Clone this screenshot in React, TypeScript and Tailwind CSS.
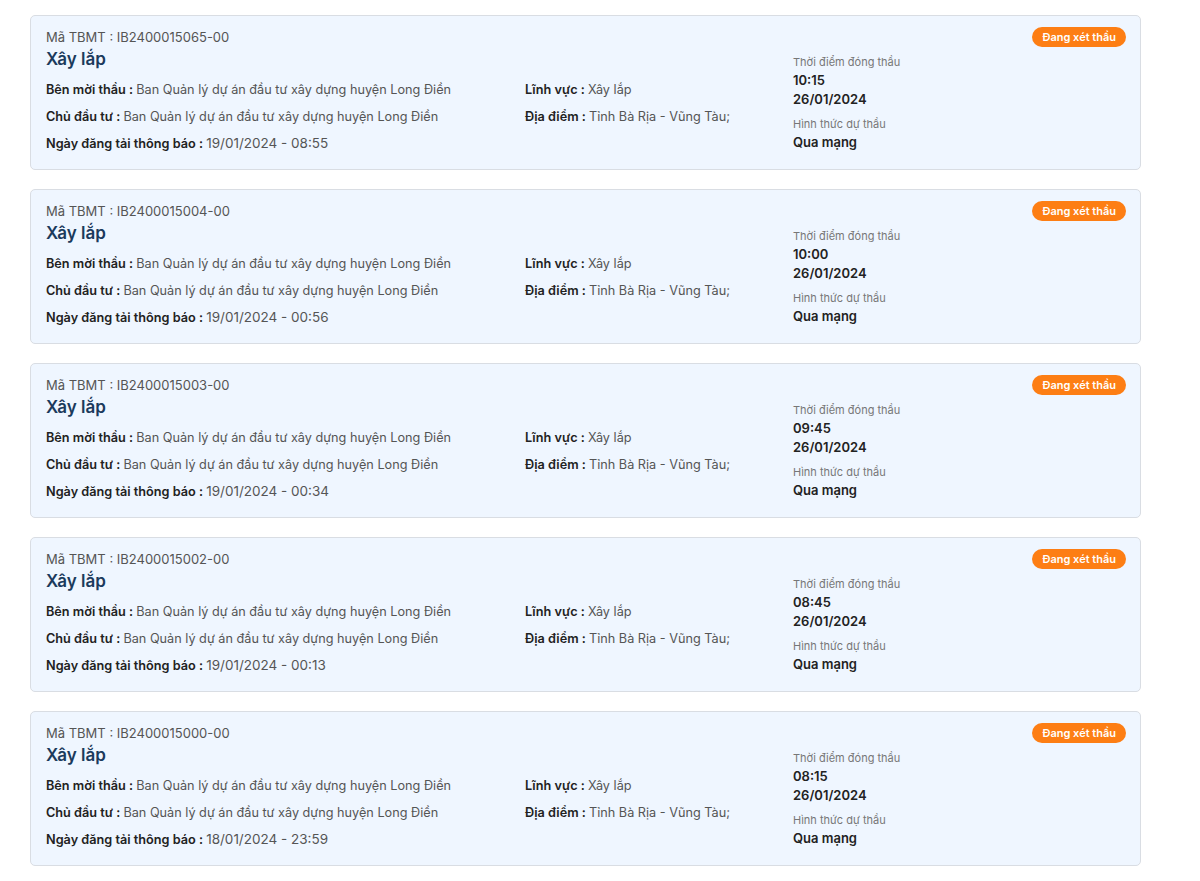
const items = [
  { code: "IB2400015065-00", posted: "19/01/2024 - 08:55", time: "10:15" },
  { code: "IB2400015004-00", posted: "19/01/2024 - 00:56", time: "10:00" },
  { code: "IB2400015003-00", posted: "19/01/2024 - 00:34", time: "09:45" },
  { code: "IB2400015002-00", posted: "19/01/2024 - 00:13", time: "08:45" },
  { code: "IB2400015000-00", posted: "18/01/2024 - 23:59", time: "08:15" },
];

function Field({ label, value, wide }: { label: string; value: string; wide?: boolean }) {
  return (
    <p className="text-[12.7px] leading-[26.5px] whitespace-nowrap">
      <span className="font-semibold text-[#222]">{label} : </span>
      <span className={wide ? "text-[13.5px] text-[#555]" : "text-[#555]"}>{value}</span>
    </p>
  );
}

function TenderCard({ code, posted, time }: { code: string; posted: string; time: string }) {
  return (
    <div className="h-[155px] bg-[#eff6ff] border border-[#d9dde3] rounded-[5px] pl-[15px] pr-[14px] pt-[11px] flex">
      <div className="w-[747px]">
        <p className="text-[13px] leading-[20px] text-[#555]">Mã TBMT : {code}</p>
        <h3 className="text-[17px] leading-[24px] font-semibold text-[#1b3a5c]">Xây lắp</h3>
        <div className="mt-[6px] grid grid-cols-[479px_1fr]">
          <Field label="Bên mời thầu" value="Ban Quản lý dự án đầu tư xây dựng huyện Long Điền" />
          <Field label="Lĩnh vực" value="Xây lắp" />
          <Field label="Chủ đầu tư" value="Ban Quản lý dự án đầu tư xây dựng huyện Long Điền" />
          <Field label="Địa điểm" value="Tỉnh Bà Rịa - Vũng Tàu;" />
          <Field label="Ngày đăng tải thông báo" value={posted} wide />
        </div>
      </div>
      <div className="flex-1 flex flex-col">
        <div className="flex justify-end">
          <span className="h-[20px] px-[10px] rounded-full bg-[#fd7e14] text-white text-[11px] font-semibold leading-[20px]">
            Đang xét thầu
          </span>
        </div>
        <p className="mt-[8px] text-[11px] leading-[14px] text-[#777]">Thời điểm đóng thầu</p>
        <p className="mt-[2px] text-[13px] leading-[19px] font-semibold text-[#222]">{time}</p>
        <p className="text-[13px] leading-[19px] font-semibold text-[#222]">26/01/2024</p>
        <p className="mt-[8px] text-[11px] leading-[14px] text-[#777]">Hình thức dự thầu</p>
        <p className="mt-[2px] text-[13px] leading-[19px] font-semibold text-[#222]">Qua mạng</p>
      </div>
    </div>
  );
}

export default function App() {
  return (
    <div className="min-h-screen bg-white pt-[15px] pl-[30px] font-['Inter',sans-serif]">
      <div className="w-[1111px] flex flex-col gap-[19px]">
        {items.map((it) => (
          <TenderCard key={it.code} {...it} />
        ))}
      </div>
    </div>
  );
}
